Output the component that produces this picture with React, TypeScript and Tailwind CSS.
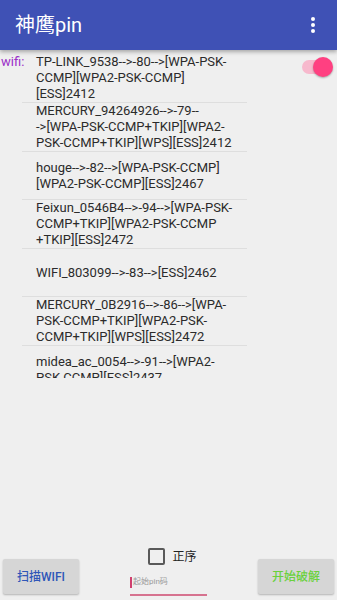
import React from 'react';

const networks: string[][] = [
  ['TP-LINK_9538-->-80-->[WPA-PSK-', 'CCMP][WPA2-PSK-CCMP]', '[ESS]2412'],
  ['MERCURY_94264926-->-79--', '->[WPA-PSK-CCMP+TKIP][WPA2-', 'PSK-CCMP+TKIP][WPS][ESS]2412'],
  ['houge-->-82-->[WPA-PSK-CCMP]', '[WPA2-PSK-CCMP][ESS]2467'],
  ['Feixun_0546B4-->-94-->[WPA-PSK-', 'CCMP+TKIP][WPA2-PSK-CCMP', '+TKIP][ESS]2472'],
  ['WIFI_803099-->-83-->[ESS]2462'],
  ['MERCURY_0B2916-->-86-->[WPA-', 'PSK-CCMP+TKIP][WPA2-PSK-', 'CCMP+TKIP][WPS][ESS]2472'],
  ['midea_ac_0054-->-91-->[WPA2-', 'PSK-CCMP][ESS]2437'],
];

export default function App() {
  return (
    <div className="w-[337px] h-[600px] bg-[#efefef] flex flex-col overflow-hidden font-['Roboto','Noto_Sans_CJK_SC',sans-serif]">
      {/* Action bar */}
      <div className="h-[50px] shrink-0 bg-[#3f51b5] flex items-center justify-between pl-[15px] pr-[22px] shadow-[0_2px_4px_rgba(0,0,0,0.3)] z-10">
        <span className="text-white text-[20px] font-normal leading-none">神鹰pin</span>
        <div className="flex flex-col gap-[2px]">
          <span className="w-[4px] h-[4px] rounded-full bg-white" />
          <span className="w-[4px] h-[4px] rounded-full bg-white" />
          <span className="w-[4px] h-[4px] rounded-full bg-white" />
        </div>
      </div>

      {/* Wifi list */}
      <div className="flex-1 flex items-start pt-[4px]">
        <span className="w-[22px] shrink-0 text-[13px] leading-[16px] text-[#9b30c8] pl-[1px]">wifi:</span>
        <div className="w-[225px] h-[324px] overflow-hidden">
          {networks.map((lines, i) => (
            <div key={i} className="min-h-[48px] flex flex-col justify-center pl-[14px] border-b border-[#dedede] text-[13px] leading-[16px] text-[#2b2b2b]">
              {lines.map((l, j) => (
                <span key={j} className="block whitespace-nowrap">{l}</span>
              ))}
            </div>
          ))}
        </div>
        <div className="ml-auto mr-[4px] mt-[3px] relative w-[31px] h-[20px] flex items-center">
          <div className="w-[30px] h-[14px] rounded-full bg-[#f7b9cd]" />
          <div className="absolute right-0 top-0 w-[20px] h-[20px] rounded-full bg-[#ff4081] shadow-[0_1px_2px_rgba(0,0,0,0.3)]" />
        </div>
      </div>

      {/* Bottom controls */}
      <div className="shrink-0 flex items-end justify-between px-[3px] pb-[4px]">
        <button className="w-[76px] h-[35px] mb-[2px] rounded-[2px] bg-[#d6d6d6] shadow-[0_1px_2px_rgba(0,0,0,0.25)] text-[12px] font-medium text-[#2f56b8]">
          扫描WIFI
        </button>
        <div className="flex flex-col items-center">
          <div className="flex items-center gap-[7px] h-[17px] pl-[8px]">
            <span className="w-[17px] h-[17px] rounded-[2px] border-2 border-[#595959]" />
            <span className="text-[12px] leading-none text-[#222]">正序</span>
          </div>
          <div className="mt-[5px] w-[77px] h-[26px] border-b-2 border-[#d6728f] flex items-center">
            <span className="w-[2px] h-[11px] bg-[#d0406f] mr-[1px]" />
            <span className="text-[8px] text-[#9a9a9a] leading-none">起始pin码</span>
          </div>
        </div>
        <button className="w-[76px] h-[35px] mb-[2px] rounded-[2px] bg-[#d6d6d6] shadow-[0_1px_2px_rgba(0,0,0,0.25)] text-[12px] font-medium text-[#6ad13c]">
          开始破解
        </button>
      </div>
    </div>
  );
}
